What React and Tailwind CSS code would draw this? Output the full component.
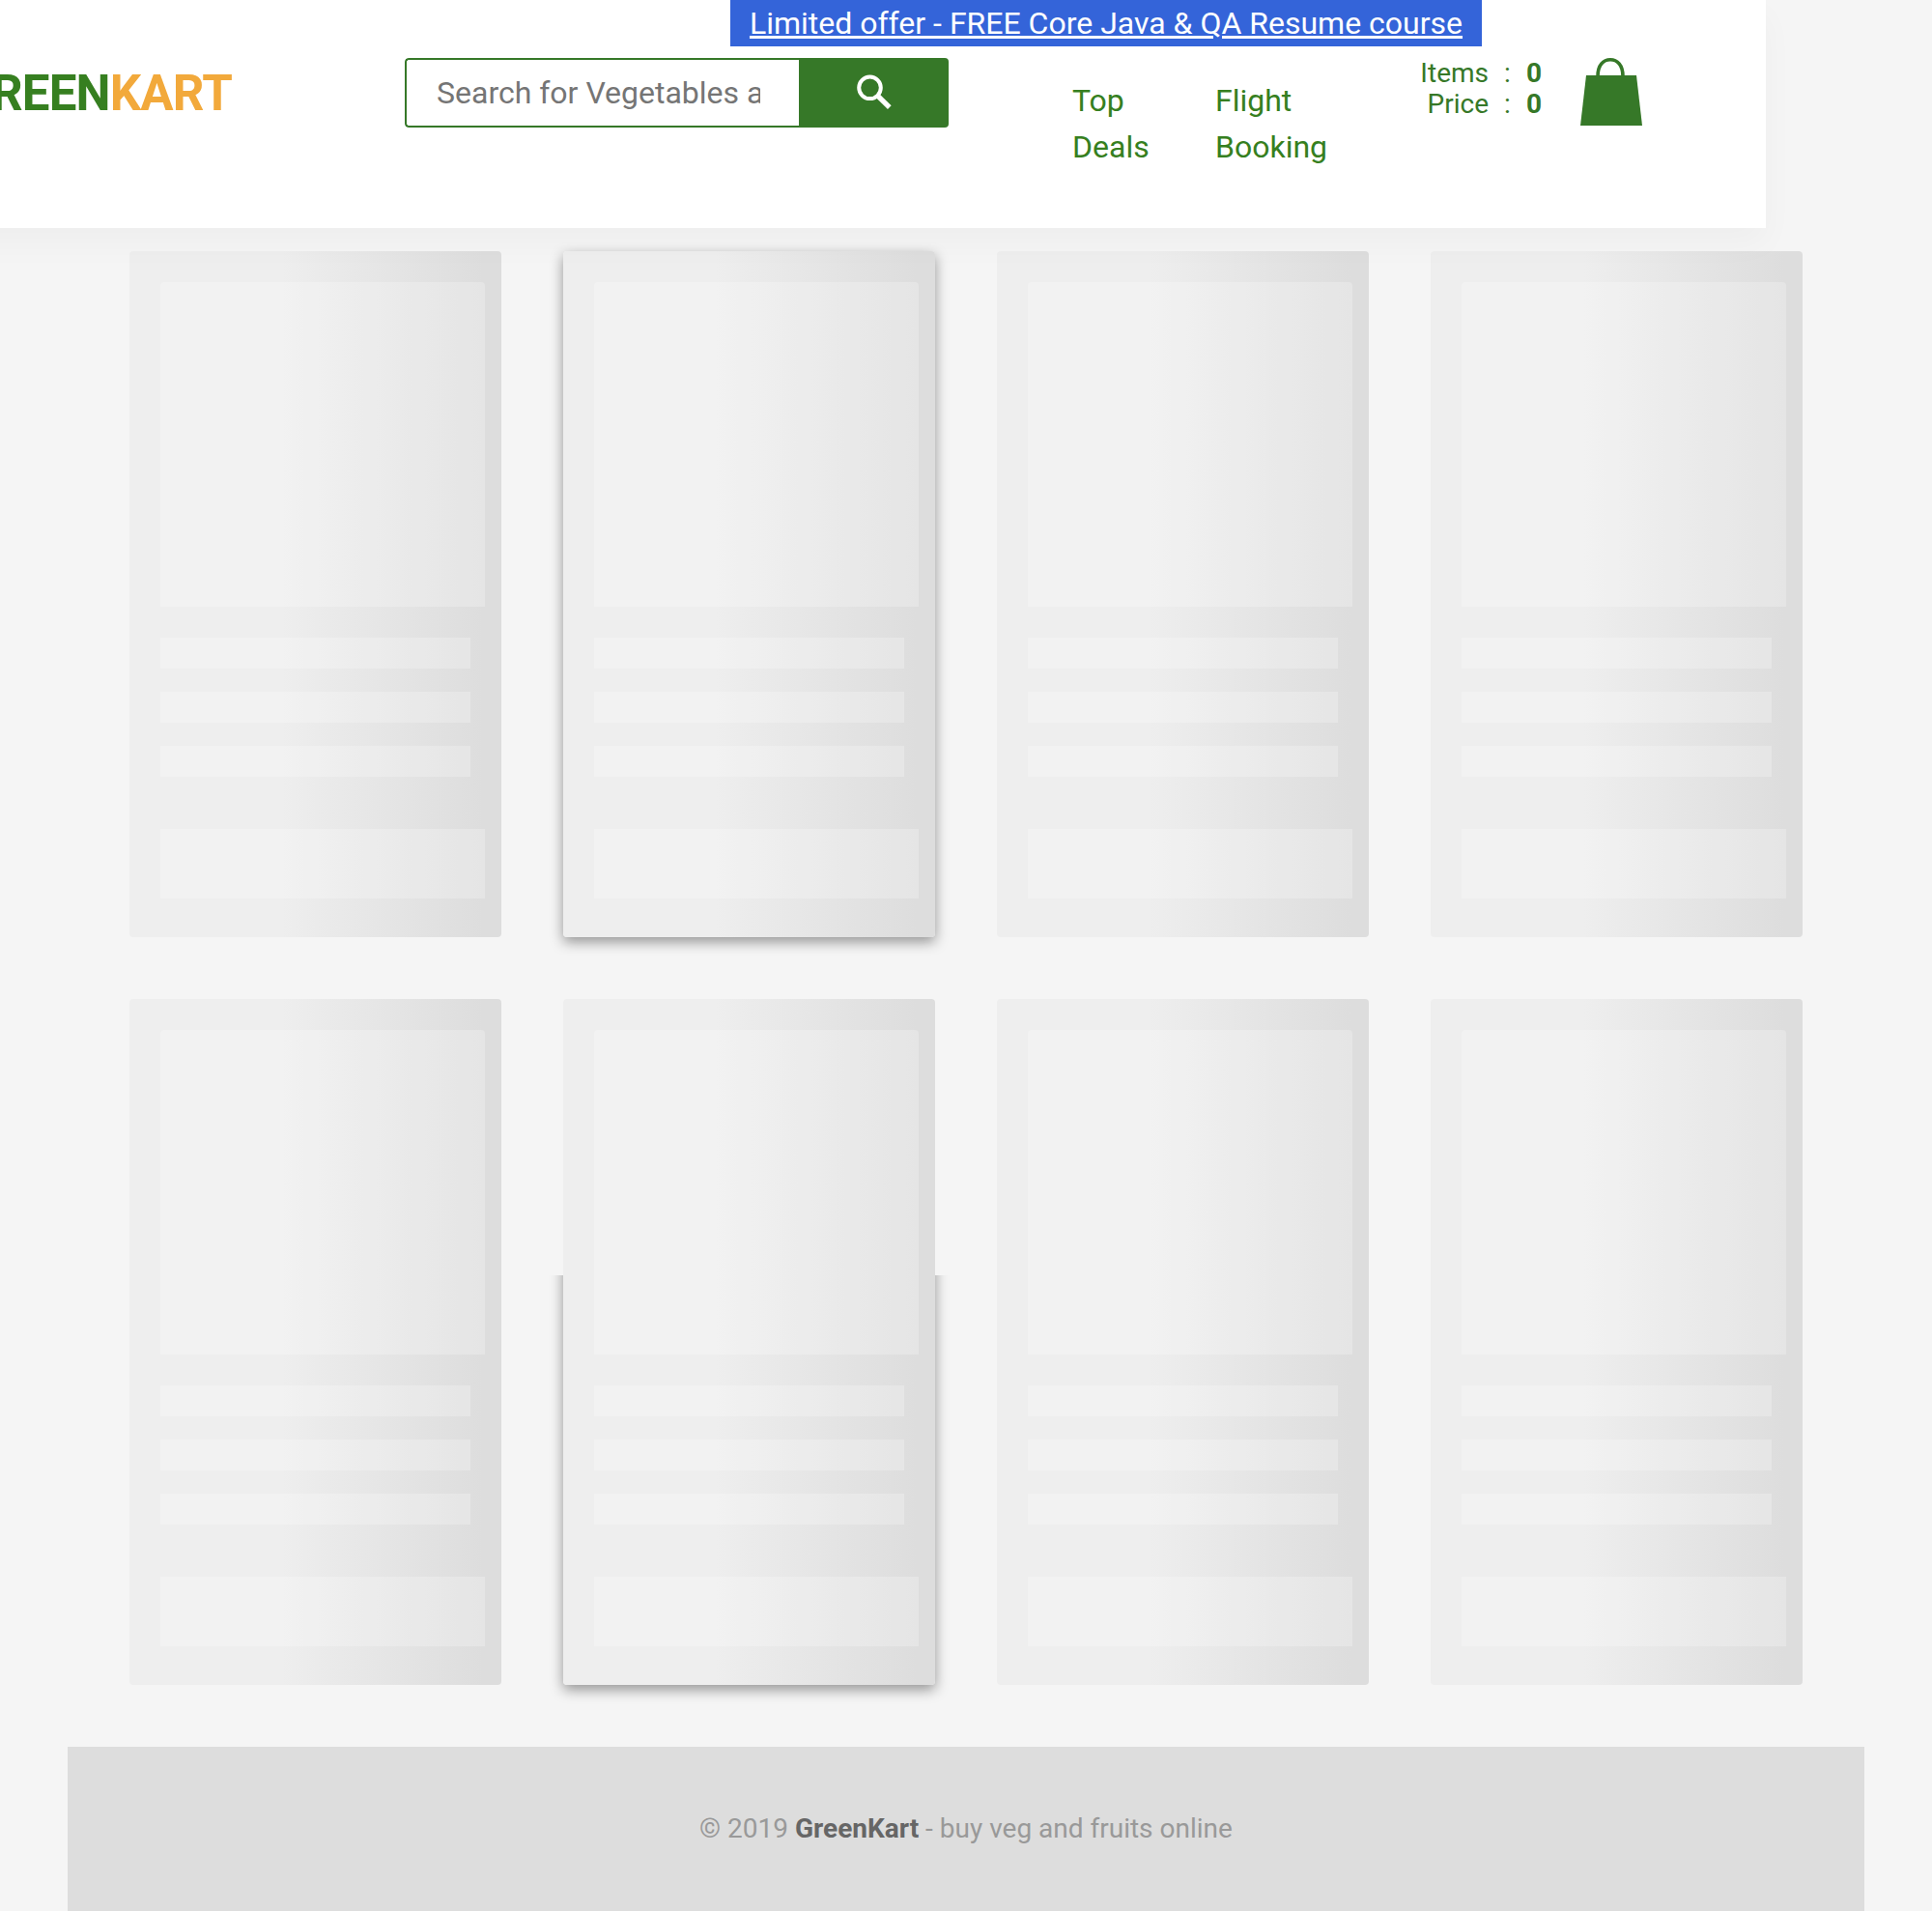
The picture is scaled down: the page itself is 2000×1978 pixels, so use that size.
const SHADOW_CARD = 1;

function SearchIcon() {
  return (
    <svg width="40" height="44" viewBox="0 0 40 44" fill="none" stroke="#fff">
      <circle cx="15.5" cy="16.8" r="11.3" strokeWidth="4" />
      <path d="M23.8 25.3 L35.8 37.2" strokeWidth="5.2" />
    </svg>
  );
}

function BagIcon() {
  return (
    <svg width="64" height="70" viewBox="0 0 64 70">
      <path d="M6 18 H58 L64 70 H0 Z" fill="#367828" />
      <path d="M18 19 C18 7 24 1.8 31 1.8 C38 1.8 44 7 44 19" fill="none" stroke="#367828" strokeWidth="3.6" />
    </svg>
  );
}

function Header() {
  return (
    <header className="relative z-10 -ml-20 h-[236px] w-[1908px] bg-white pl-20 shadow-[0_16px_32px_rgba(0,0,0,0.03)]">
      <div className="ml-[756px] flex h-12 w-[778px] items-center justify-center bg-[#3464d9]">
        <a className="text-[32px] leading-[48px] whitespace-nowrap text-white underline">
          Limited offer - FREE Core Java &amp; QA Resume course
        </a>
      </div>
      <div className="mt-3 flex items-start">
        <div className="-ml-20 flex h-[72px] w-[320px] shrink-0 items-center justify-end pt-0.5 text-[51px] leading-[72px] font-bold tracking-[-0.8px] whitespace-nowrap">
          <span className="text-[#367f20]">GREEN</span>
          <span className="text-[#f2a93b]">KART</span>
        </div>
        <div className="ml-[179px] flex h-[72px] w-[563px] shrink-0 overflow-hidden rounded">
          <div className="h-full w-[408px] rounded-l border-2 border-r-0 border-[#367828] pr-10 pl-[31px]">
            <div className="overflow-hidden text-[32px] leading-[68px] whitespace-nowrap text-[#757575]">
              Search for Vegetables and Fruits
            </div>
          </div>
          <button className="flex flex-1 items-center justify-center bg-[#367828]">
            <SearchIcon />
          </button>
        </div>
        <nav className="ml-[128px] flex pt-5 text-[32px] leading-[48px] text-[#367f20]">
          <a className="w-[148px]">Top<br />Deals</a>
          <a className="w-[190px]">Flight<br />Booking</a>
        </nav>
        <div className="w-[93px] shrink-0 text-right text-[28px] leading-8 text-[#367828]">
          <div>Items</div>
          <div>Price</div>
        </div>
        <div className="w-[39px] shrink-0 text-center text-[28px] leading-8 text-[#367828]">
          <div>:</div>
          <div>:</div>
        </div>
        <div className="w-[56px] shrink-0 text-[28px] leading-8 font-bold text-[#367828]">
          <div>0</div>
          <div>0</div>
        </div>
        <BagIcon />
      </div>
    </header>
  );
}

function Card({ shadow }) {
  return (
    <div className="relative h-[710px] w-[385px]">
      {shadow === "full" && (
        <div className="absolute inset-0 rounded shadow-[0_5px_14px_rgba(0,0,0,0.4)]" />
      )}
      {shadow === "lower" && (
        <div className="absolute inset-0 [clip-path:inset(286px_-40px_-40px_-40px)]">
          <div className="h-full rounded shadow-[0_5px_14px_rgba(0,0,0,0.4)]" />
        </div>
      )}
      <div className="relative h-full rounded bg-[linear-gradient(to_right,#eeeeee_0%,#eeeeee_41%,#dddddd_95%,#dddddd_100%)] pt-8 pl-8">
        <div className="h-[336px] w-[336px] rounded-t bg-white/24" />
        <div className="mt-8 flex flex-col gap-6">
          <div className="h-8 w-[321px] bg-white/24" />
          <div className="h-8 w-[321px] bg-white/24" />
          <div className="h-8 w-[321px] bg-white/24" />
        </div>
        <div className="mt-[54px] h-[72px] w-[336px] bg-white/24" />
      </div>
    </div>
  );
}

export default function App() {
  const cards = Array.from({ length: 8 }, (_, i) => i);
  return (
    <div className="h-[1978px] w-[2000px] overflow-hidden bg-[#f5f5f5] font-['Roboto',sans-serif]">
      <Header />
      <main className="mt-6 ml-[134px] grid w-max grid-cols-[repeat(4,385px)] gap-16">
        {cards.map((i) => (
          <Card key={i} shadow={i === SHADOW_CARD ? "full" : i === SHADOW_CARD + 4 ? "lower" : "none"} />
        ))}
      </main>
      <footer className="mx-[70px] mt-16 h-[170px] bg-[#dddddd] pt-16 text-center text-[28px] leading-[42px] text-[#999999]">
        © 2019 <span className="font-bold text-[#666666]">GreenKart</span> - buy veg and fruits online
      </footer>
    </div>
  );
}
